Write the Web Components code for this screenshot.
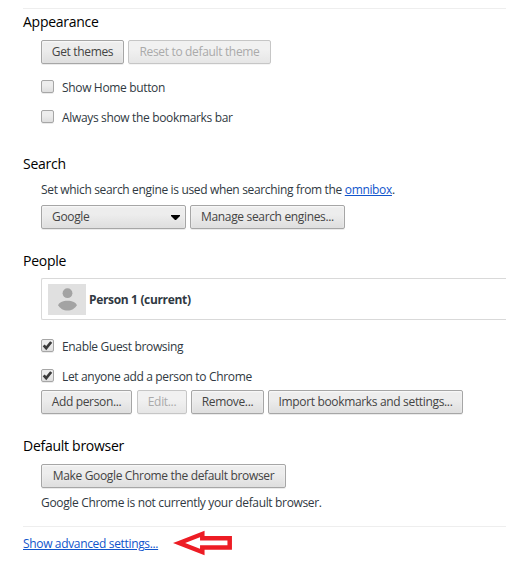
<!DOCTYPE html>
<html lang="en">
<head>
<meta charset="utf-8">
<title>Settings</title>
<style>
  body {
    margin: 0;
    width: 506px;
    height: 567px;
    overflow: hidden;
    background: #fff;
    color: #303942;
    font: 12px/20px "Open Sans", "Noto Sans", sans-serif;
    letter-spacing: -0.34px;
  }
</style>
</head>
<body>
<settings-page>
  <settings-section heading="Appearance" style="padding-top: 3px; --gap: 8px">
    <button-row>
      <settings-button style="--w: 83px">Get themes</settings-button>
      <settings-button style="--w: 143px" disabled>Reset to default theme</settings-button>
    </button-row>
    <settings-checkbox style="margin-top: 12px">Show Home button</settings-checkbox>
    <settings-checkbox style="margin-top: 9px">Always show the bookmarks bar</settings-checkbox>
  </settings-section>

  <settings-section heading="Search" style="padding-top: 27px; --gap: 6px">
    <settings-note style="margin-bottom: 5px">Set which search engine is used when searching from the <settings-link>omnibox</settings-link>.</settings-note>
    <button-row>
      <settings-select style="--w: 145px">Google</settings-select>
      <settings-button style="--w: 155px">Manage search engines...</settings-button>
    </button-row>
  </settings-section>

  <settings-section heading="People" style="padding-top: 22px; --gap: 7px">
    <profile-list><profile-item>Person 1 (current)</profile-item></profile-list>
    <settings-checkbox style="margin-top: 15px" checked>Enable Guest browsing</settings-checkbox>
    <settings-checkbox style="margin-top: 9px" checked>Let anyone add a person to Chrome</settings-checkbox>
    <button-row style="margin-top: 4px">
      <settings-button style="--w: 91px; margin-right: 1px">Add person...</settings-button>
      <settings-button style="--w: 50px" disabled>Edit...</settings-button>
      <settings-button style="--w: 73px">Remove...</settings-button>
      <settings-button style="--w: 195px">Import bookmarks and settings...</settings-button>
    </button-row>
  </settings-section>

  <settings-section heading="Default browser" style="padding-top: 22px; --gap: 8px">
    <button-row>
      <settings-button style="--w: 245px">Make Google Chrome the default browser</settings-button>
    </button-row>
    <settings-note style="margin-top: 5px">Google Chrome is not currently your default browser.</settings-note>
  </settings-section>

  <settings-footer slot="footer">
    <settings-link>Show advanced settings...</settings-link>
    <arrow-mark></arrow-mark>
  </settings-footer>
</settings-page>

<script>
  function define(name, html) {
    customElements.define(name, class extends HTMLElement {
      constructor() {
        super();
        this.attachShadow({ mode: 'open' });
      }

      connectedCallback() {
        this.shadowRoot.innerHTML = html.trim();
      }
    });
  }

  define('settings-page', `
    <style>
      :host { display: block; padding: 8px 0 0 23px; }
      .rule { height: 1px; background: #eee; }
      .end { margin-top: 13px; }
    </style>
    <div class="rule"></div>
    <slot></slot>
    <div class="rule end"></div>
    <slot name="footer"></slot>
  `);

  class SettingsSection extends HTMLElement {
    constructor() {
      super();
      this.attachShadow({ mode: 'open' });
    }

    connectedCallback() {
      const heading = this.getAttribute('heading') || '';
      this.shadowRoot.innerHTML = `
        <style>
          :host { display: block; }
          h3 {
            margin: 0 0 var(--gap, 8px);
            font-size: 14px;
            font-weight: normal;
            letter-spacing: -0.27px;
            line-height: 20px;
            color: #000;
          }
          .body { display: flex; flex-direction: column; margin-left: 18px; }
        </style>
        <h3>${heading}</h3>
        <div class="body"><slot></slot></div>
      `;
    }
  }
  customElements.define('settings-section', SettingsSection);

  define('button-row', `
    <style>
      :host { display: flex; gap: 4px; }
    </style>
    <slot></slot>
  `);

  define('settings-button', `
    <style>
      :host { display: block; flex: none; width: var(--w); }
      button {
        display: block;
        box-sizing: border-box;
        width: 100%;
        height: 24px;
        padding: 0;
        border: 1px solid #a6a6a6;
        border-radius: 2px;
        background: linear-gradient(#ededed, #ededed 38%, #dedede);
        box-shadow: 0 1px 0 rgba(0, 0, 0, 0.08), inset 0 1px 2px rgba(255, 255, 255, 0.75);
        color: #444;
        font: inherit;
        letter-spacing: inherit;
        line-height: 22px;
        white-space: nowrap;
      }
      :host([disabled]) button {
        border-color: #c6c6c6;
        background: linear-gradient(#f1f1f1, #f1f1f1 38%, #e6e6e6);
        box-shadow: 0 1px 0 rgba(0, 0, 0, 0.04);
        color: #aaa;
      }
    </style>
    <button type="button"><slot></slot></button>
  `);

  define('settings-select', `
    <style>
      :host {
        display: flex;
        align-items: center;
        justify-content: space-between;
        box-sizing: border-box;
        flex: none;
        width: var(--w);
        height: 24px;
        padding: 0 5px 0 10px;
        border: 1px solid #a6a6a6;
        border-radius: 2px;
        background: linear-gradient(#ededed, #ededed 38%, #dedede);
        box-shadow: 0 1px 0 rgba(0, 0, 0, 0.08), inset 0 1px 2px rgba(255, 255, 255, 0.75);
        color: #444;
      }
    </style>
    <slot></slot>
    <svg width="9" height="5" viewBox="0 0 9 5"><path d="M0 0h9v1L5 5H4L0 1z" fill="#000"/></svg>
  `);

  define('settings-checkbox', `
    <style>
      :host {
        display: flex;
        align-items: center;
        height: 21px;
      }
      .box {
        box-sizing: border-box;
        width: 13px;
        height: 13px;
        margin-right: 8px;
        border: 1px solid #a6a6a6;
        border-radius: 2px;
        background: linear-gradient(#ededed, #ededed 38%, #dedede);
        box-shadow: 0 1px 0 rgba(0, 0, 0, 0.08);
      }
      .label { padding-top: 2px; }
      svg { display: none; }
      :host([checked]) svg { display: block; }
    </style>
    <span class="box">
      <svg width="11" height="11" viewBox="0 0 11 11"><path d="M1.7 5.4l2.5 2.8 5-6.2" fill="none" stroke="#3a3a3a" stroke-width="2.7"/></svg>
    </span>
    <span class="label"><slot></slot></span>
  `);

  define('settings-note', `
    <style>
      :host { display: block; height: 20px; white-space: nowrap; }
    </style>
    <slot></slot>
  `);

  define('settings-link', `
    <style>
      :host { display: inline; }
      a { color: #15c; text-decoration: underline; text-underline-offset: 1px; text-decoration-thickness: 1px; }
    </style>
    <a><slot></slot></a>
  `);

  define('profile-list', `
    <style>
      :host {
        display: block;
        box-sizing: border-box;
        height: 42px;
        padding: 5px 6px;
        border: 1px solid #d9d9d9;
        border-right: 0;
        border-radius: 2px 0 0 2px;
      }
    </style>
    <slot></slot>
  `);

  define('profile-item', `
    <style>
      :host { display: flex; align-items: center; gap: 3px; font-weight: bold; }
      svg { display: block; }
    </style>
    <svg width="38" height="31" viewBox="0 0 38 31">
      <path d="M0 0h38v31H0z" fill="#e0e0e0"/>
      <circle cx="19.5" cy="9.2" r="4.9" fill="#a3a3a3"/>
      <path d="M10.3 21.2c0-2.4 4.8-4.4 9.2-4.4s9.2 2 9.2 4.4c-1.7 3.2-5.1 5.4-9.2 5.4s-7.5-2.2-9.2-5.4z" fill="#a3a3a3"/>
    </svg>
    <span><slot></slot></span>
  `);

  define('settings-footer', `
    <style>
      :host { display: flex; align-items: center; gap: 15px; padding-top: 3px; }
    </style>
    <slot></slot>
  `);

  define('arrow-mark', `
    <style>
      :host { display: block; }
      svg { display: block; }
    </style>
    <svg width="60" height="28" viewBox="0 0 60 28">
      <path d="M6.2 13L29.3 4V8.3H56.7V17.5H29.3V22z" fill="#fff" stroke="#ed1c24" stroke-width="4.5"/>
    </svg>
  `);
</script>
</body>
</html>
